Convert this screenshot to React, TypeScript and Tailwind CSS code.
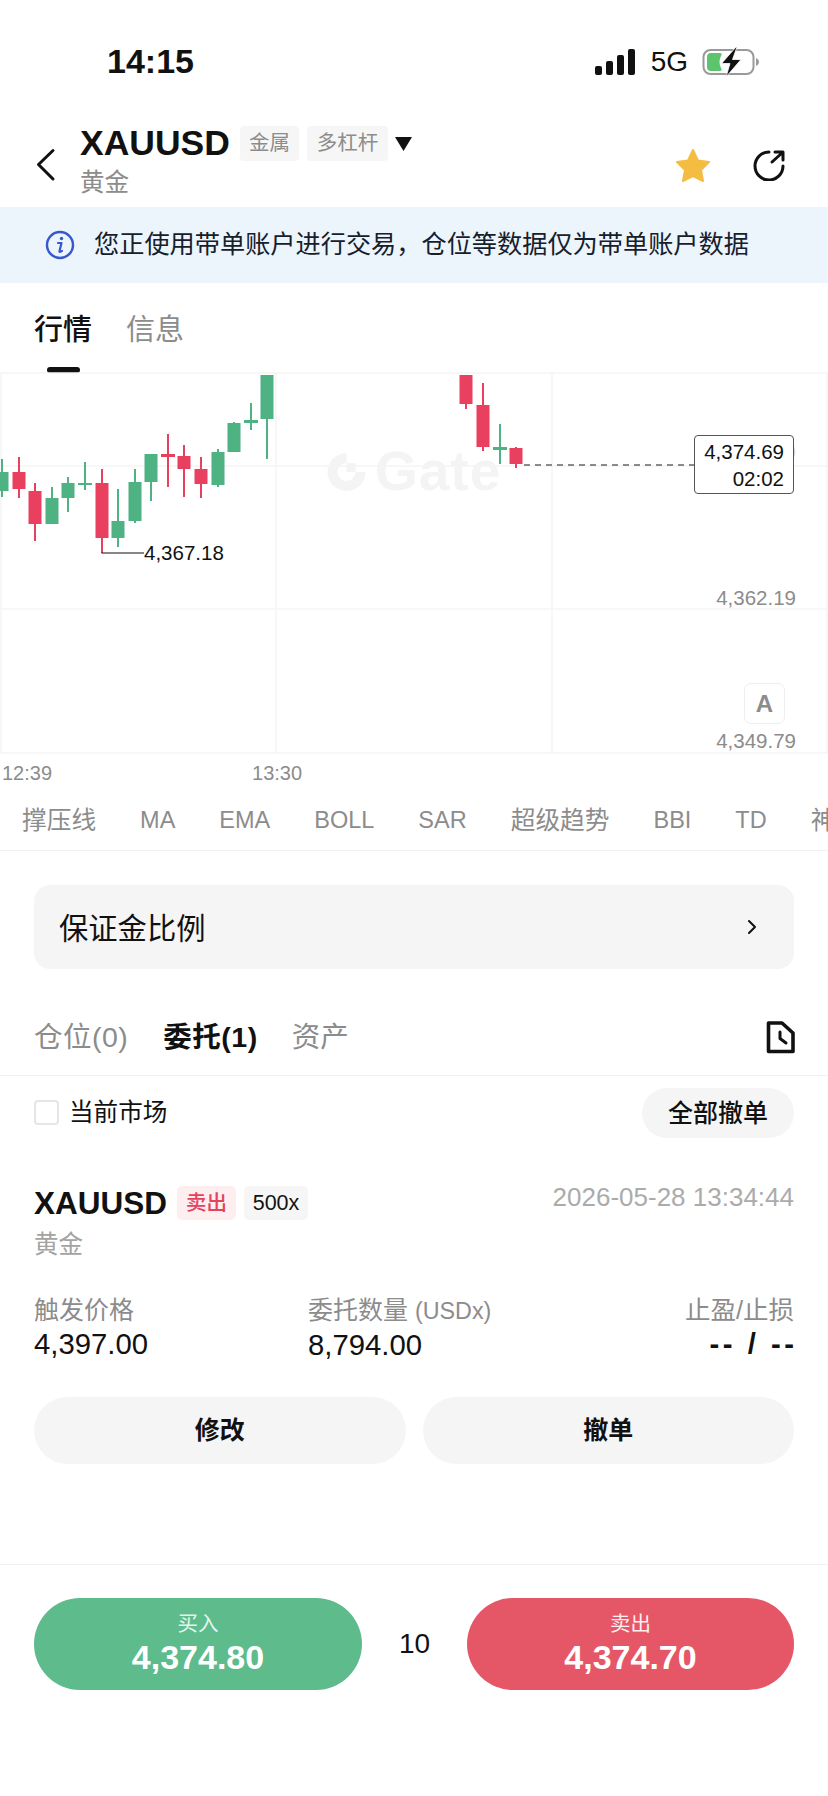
import { ChevronRight } from 'lucide-react';

const FONT = 'font-["Liberation_Sans","Noto_Sans_CJK_SC",sans-serif]';
const UP = '#4fb283';
const DOWN = '#e8405e';

// x, body top, body bottom, wick top, wick bottom, in page pixels
type Candle = { x: number; o: number; c: number; hi: number; lo: number; up: boolean; thin?: boolean };

const candles: Candle[] = [
  { x: 2, o: 472, c: 491, hi: 459, lo: 497, up: true },
  { x: 19, o: 472, c: 489, hi: 457, lo: 498, up: false },
  { x: 35, o: 491, c: 524, hi: 483, lo: 541, up: false },
  { x: 52, o: 498, c: 524, hi: 487, lo: 524, up: true },
  { x: 68, o: 483, c: 498, hi: 477, lo: 512, up: true },
  { x: 85, o: 483, c: 484, hi: 462, lo: 490, up: true, thin: true },
  { x: 102, o: 483, c: 538, hi: 469, lo: 553, up: false },
  { x: 118, o: 521, c: 538, hi: 489, lo: 547, up: true },
  { x: 135, o: 482, c: 521, hi: 469, lo: 523, up: true },
  { x: 151, o: 454, c: 482, hi: 454, lo: 501, up: true },
  { x: 168, o: 454, c: 456, hi: 434, lo: 487, up: false, thin: true },
  { x: 184, o: 456, c: 469, hi: 445, lo: 497, up: false },
  { x: 201, o: 469, c: 484, hi: 457, lo: 498, up: false },
  { x: 218, o: 452, c: 485, hi: 449, lo: 487, up: true },
  { x: 234, o: 423, c: 452, hi: 422, lo: 452, up: true },
  { x: 251, o: 420, c: 422, hi: 403, lo: 430, up: true, thin: true },
  { x: 267, o: 375, c: 419, hi: 375, lo: 459, up: true },
  { x: 466, o: 375, c: 404, hi: 375, lo: 409, up: false },
  { x: 483, o: 405, c: 447, hi: 383, lo: 451, up: false },
  { x: 500, o: 447, c: 449, hi: 424, lo: 464, up: true, thin: true },
  { x: 516, o: 448, c: 464, hi: 447, lo: 468, up: false },
];

function CandleChart() {
  return (
    <svg width="828" height="382" viewBox="0 372 828 382" className="block">
      <path
        d="M0 373H828M0 466H828M0 609H828M0 753H828M1 373V753M276 373V753M552 373V753M827 373V753"
        stroke="#f5f5f5"
        strokeWidth="1.5"
      />
      {/* gate logo watermark */}
      <path d="M346.500 453A19 19 0 1 0 365.500 472H355.500A9 9 0 1 1 346.500 463Z" fill="#f4f4f4" />
      <rect x="346.500" y="463" width="9" height="9" fill="#f4f4f4" />
      {candles.map((k) => {
        const color = k.up ? UP : DOWN;
        return (
          <g key={k.x} fill={color}>
            <rect x={k.x - 1} y={k.hi} width="2" height={k.lo - k.hi} />
            {k.thin ? (
              <rect x={k.x - 7} y={k.o} width="14" height={k.c - k.o + 1} />
            ) : (
              <rect x={k.x - 6.5} y={k.o} width="13" height={k.c - k.o} />
            )}
          </g>
        );
      })}
      <path d="M101.500 553H144" stroke="#111" strokeWidth="1.200" fill="none" />
      <path d="M524 465H695" stroke="#666" strokeWidth="1.300" strokeDasharray="6 5" fill="none" />
    </svg>
  );
}

function Signal() {
  return (
    <svg width="42" height="28" viewBox="0 0 42 28" fill="#111">
      <rect x="0" y="18" width="7" height="9" rx="2" />
      <rect x="11" y="13" width="7" height="14" rx="2" />
      <rect x="22" y="7" width="7" height="20" rx="2" />
      <rect x="33" y="1" width="7" height="26" rx="2" />
    </svg>
  );
}

function Battery() {
  return (
    <svg width="58" height="30" viewBox="0 0 58 30">
      <rect x="1.500" y="3" width="50" height="24" rx="7" fill="none" stroke="#9a9a9a" strokeWidth="2" />
      <path d="M9 6h9c2 0 2 1.500 1 3-2 4-2 8 0 12 1 1.500 1 3-1 3H9a4 4 0 0 1-4-4V10a4 4 0 0 1 4-4z" fill="#5cc46d" />
      <path d="M54 11c2 1 3 2.500 3 4s-1 3-3 4z" fill="#9a9a9a" />
      <path d="M34 0 19.500 16.500H28L24 30 39 12.500H30.500L35 0z" fill="#111" stroke="#fff" strokeWidth="0.800" />
    </svg>
  );
}

function Star() {
  return (
    <svg width="38" height="38" viewBox="0 0 38 38">
      <path
        d="M19 4 24 14.500 35 16 27 24 29 35 19 30 9 35 11 24 3 16 14 14.500Z"
        fill="#f5bc42"
        stroke="#f5bc42"
        strokeWidth="2"
        strokeLinejoin="round"
      />
    </svg>
  );
}

function ShareIcon() {
  return (
    <svg width="32" height="32" viewBox="0 0 32 32" fill="none" stroke="#111" strokeWidth="3" strokeLinecap="round" strokeLinejoin="round">
      <path d="M16 3A14 14 0 1 0 30 17" />
      <path d="M19 13 29.500 3.500M22 3H30V11" />
    </svg>
  );
}

function InfoIcon() {
  return (
    <svg width="30" height="30" viewBox="0 0 30 30" fill="none">
      <circle cx="15" cy="15" r="13" stroke="#3557cf" strokeWidth="2.400" />
      <circle cx="16.500" cy="8.500" r="1.700" fill="#3557cf" />
      <path d="M13 13h3.500l-2 8c-.3 1 .8 1.300 2.500 0" stroke="#3557cf" strokeWidth="2.200" strokeLinecap="round" strokeLinejoin="round" />
    </svg>
  );
}

function FileClock() {
  return (
    <svg width="30" height="34" viewBox="0 0 30 34" fill="none" stroke="#111" strokeWidth="3.600" strokeLinejoin="round">
      <path d="M3.500 3H17L28 13V31.500H3.500Z" />
      <path d="M15 12V18.500L21 23" strokeWidth="3" strokeLinecap="round" />
    </svg>
  );
}

const indicators = [
  { name: '撑压线', latin: false },
  { name: 'MA', latin: true },
  { name: 'EMA', latin: true },
  { name: 'BOLL', latin: true },
  { name: 'SAR', latin: true },
  { name: '超级趋势', latin: false },
  { name: 'BBI', latin: true },
  { name: 'TD', latin: true },
  { name: '神', latin: false },
];

export default function App() {
  return (
    <div className={`${FONT} flex h-[1796px] w-[828px] flex-col overflow-hidden bg-white text-[#111]`}>
      {/* status bar */}
      <div className="flex h-[124px] items-start justify-between pt-[39px] pr-[68px] pl-[107px]">
        <span className="text-[34px] leading-[44px] font-bold">14:15</span>
        <div className="mt-[8px] flex items-center gap-[14px]">
          <Signal />
          <span className="text-[28px] leading-[28px] font-medium">5G</span>
          <Battery />
        </div>
      </div>

      {/* header */}
      <div className="flex h-[83px] items-start pr-[43px] pl-[36px]">
        <svg width="20" height="34" viewBox="0 0 20 34" fill="none" stroke="#111" strokeWidth="3" strokeLinecap="round" strokeLinejoin="round" className="mt-[24px] shrink-0">
          <path d="M17 2.500 2.500 16.500 17 31" />
        </svg>
        <div className="ml-[24px] flex flex-col">
          <div className="flex items-center">
            <span className="text-[35.5px] leading-[38px] font-bold">XAUUSD</span>
            <span className="ml-[10px] flex h-[35px] w-[59px] items-center justify-center rounded-[4px] bg-[#f6f6f6] text-[20.5px] text-[#8c8c8c]">金属</span>
            <span className="ml-[8px] flex h-[35px] w-[81px] items-center justify-center rounded-[4px] bg-[#f6f6f6] text-[20.5px] text-[#8c8c8c]">多杠杆</span>
            <svg width="17" height="14" viewBox="0 0 17 14" className="mt-[2px] ml-[7px]">
              <path d="M0 0h17L8.500 14z" fill="#111" />
            </svg>
          </div>
          <span className="mt-[6px] text-[24.5px] leading-[30px] text-[#8c8c8c]">黄金</span>
        </div>
        <div className="mt-[22px] ml-auto flex items-center gap-[41px]">
          <Star />
          <ShareIcon />
        </div>
      </div>

      {/* notice */}
      <div className="flex h-[76px] items-center bg-[#ecf4fc] pl-[45px]">
        <InfoIcon />
        <span className="ml-[19px] text-[25.2px] whitespace-nowrap text-[#15202b]">您正使用带单账户进行交易，仓位等数据仅为带单账户数据</span>
      </div>

      {/* tabs */}
      <div className="flex h-[89px] gap-[34px] pt-[27px] pl-[34px]">
        <div className="relative">
          <span className="text-[29px] leading-[40px] font-medium">行情</span>
          <div className="absolute top-[57px] left-[13px] h-[6px] w-[33px] rounded-full bg-[#111]" />
        </div>
        <span className="text-[29px] leading-[40px] text-[#8c8c8c]">信息</span>
      </div>

      {/* chart */}
      <div className="relative h-[382px] shrink-0">
        <CandleChart />
        <span className="absolute top-[70px] left-[375px] text-[55px] leading-[58px] font-bold tracking-[1px] text-[#f4f4f4]">Gate</span>
        <span className="absolute top-[169px] left-[144px] text-[20.5px] leading-[24px]">4,367.18</span>
        <span className="absolute top-[68px] right-[32px] text-[20.5px] leading-[24px] text-[#d8d8d8]">0</span>
        <div className="absolute top-[63px] left-[694px] flex h-[59px] w-[100px] flex-col items-end justify-center rounded-[4px] border border-[#555] bg-white pr-[9px] text-[20.5px] leading-[27px]">
          <span>4,374.69</span>
          <span>02:02</span>
        </div>
        <span className="absolute top-[214px] right-[32px] text-[20.5px] leading-[24px] text-[#8c8c8c]">4,362.19</span>
        <div className="absolute top-[311px] left-[744px] flex h-[41px] w-[41px] items-center justify-center rounded-[7px] border border-[#eeeeee] bg-white text-[24px] font-bold text-[#8c8c8c]">A</div>
        <span className="absolute top-[357px] right-[32px] text-[20.5px] leading-[24px] text-[#8c8c8c]">4,349.79</span>
      </div>

      {/* time axis */}
      <div className="flex h-[37px] items-center gap-[200px] pl-[2px] text-[20px] text-[#8c8c8c]">
        <span>12:39</span>
        <span>13:30</span>
      </div>

      {/* indicators */}
      <div className="flex h-[60px] items-center gap-[44px] overflow-hidden border-b border-[#f2f2f2] pl-[22px] whitespace-nowrap text-[#8c8c8c]">
        {indicators.map((item) => (
          <span key={item.name} className={item.latin ? 'shrink-0 text-[23.5px]' : 'shrink-0 text-[24.7px]'}>{item.name}</span>
        ))}
      </div>

      {/* margin ratio */}
      <div className="mx-[34px] mt-[34px] flex h-[84px] items-center justify-between rounded-[16px] bg-[#f5f5f5] pr-[30px] pl-[25px]">
        <span className="pt-[3px] text-[29.3px]">保证金比例</span>
        <ChevronRight size={24} strokeWidth={2} />
      </div>

      {/* position tabs */}
      <div className="flex h-[107px] items-start border-b border-[#f2f2f2] pt-[48px] pr-[33px] pl-[34px]">
        <span className="text-[28.5px] leading-[40px] tracking-[0.5px] text-[#8c8c8c]">仓位(0)</span>
        <span className="ml-[35px] text-[28.5px] leading-[40px] font-bold tracking-[0.5px]">委托(1)</span>
        <span className="ml-[34px] text-[28.5px] leading-[40px] text-[#8c8c8c]">资产</span>
        <span className="mt-[3px] ml-auto"><FileClock /></span>
      </div>

      {/* filter row */}
      <div className="mt-[12px] flex h-[50px] items-center justify-between px-[34px]">
        <label className="flex items-center gap-[10px]">
          <span className="h-[25px] w-[25px] rounded-[4px] border-2 border-[#e5e5e5]" />
          <span className="pt-[1px] text-[24.6px]">当前市场</span>
        </label>
        <span className="flex h-[50px] w-[152px] items-center justify-center rounded-full bg-[#f5f5f5] pt-[1px] text-[25px] font-medium">全部撤单</span>
      </div>

      {/* order */}
      <div className="mt-[48px] flex h-[34px] items-center px-[34px]">
        <span className="text-[31.5px] leading-[34px] font-bold">XAUUSD</span>
        <span className="ml-[10px] flex h-[34px] w-[59px] items-center justify-center rounded-[5px] bg-[#fdeef0] text-[20.5px] font-medium text-[#e5425e]">卖出</span>
        <span className="ml-[8px] flex h-[34px] w-[64px] items-center justify-center rounded-[5px] bg-[#f6f6f6] text-[21.5px]">500x</span>
        <span className="mb-[12px] ml-auto text-[26px] text-[#ababab]">2026-05-28 13:34:44</span>
      </div>
      <span className="mt-[9px] px-[34px] text-[24.5px] leading-[32px] text-[#a3a3a3]">黄金</span>

      <div className="mt-[32px] grid grid-cols-[274px_1fr_auto] px-[34px]">
        <div className="flex flex-col">
          <span className="text-[25px] leading-[34px] text-[#8c8c8c]">触发价格</span>
          <span className="text-[29.3px] leading-[33px] font-medium">4,397.00</span>
        </div>
        <div className="flex flex-col">
          <span className="text-[25px] leading-[34px] text-[#8c8c8c]">委托数量 <span className="text-[23.3px]">(USDx)</span></span>
          <span className="text-[29.3px] leading-[33px] font-medium">8,794.00</span>
        </div>
        <div className="flex flex-col items-end">
          <span className="text-[25.5px] leading-[34px] text-[#8c8c8c]">止盈/止损</span>
          <span className="-mr-[3.5px] text-[29.3px] leading-[33px] font-bold tracking-[3.5px]">-- / --</span>
        </div>
      </div>

      <div className="mt-[36px] flex gap-[17px] px-[34px]">
        <span className="flex h-[67px] flex-1 items-center justify-center rounded-full bg-[#f5f5f5] text-[25px] font-bold">修改</span>
        <span className="flex h-[67px] flex-1 items-center justify-center rounded-full bg-[#f5f5f5] text-[25px] font-bold">撤单</span>
      </div>

      {/* trade bar */}
      <div className="mt-[100px] flex items-center border-t border-[#f2f2f2] px-[34px] pt-[33px]">
        <div className="flex h-[92px] w-[328px] flex-col items-center justify-center rounded-full bg-[#5dbb8c] text-white">
          <span className="text-[20.5px] leading-[26px] text-[#e6f5ee]">买入</span>
          <span className="text-[34px] leading-[40px] font-bold">4,374.80</span>
        </div>
        <span className="flex-1 text-center text-[28px]">10</span>
        <div className="flex h-[92px] w-[327px] flex-col items-center justify-center rounded-full bg-[#e55766] text-white">
          <span className="text-[20.5px] leading-[26px] text-[#fdeef0]">卖出</span>
          <span className="text-[34px] leading-[40px] font-bold">4,374.70</span>
        </div>
      </div>
    </div>
  );
}
